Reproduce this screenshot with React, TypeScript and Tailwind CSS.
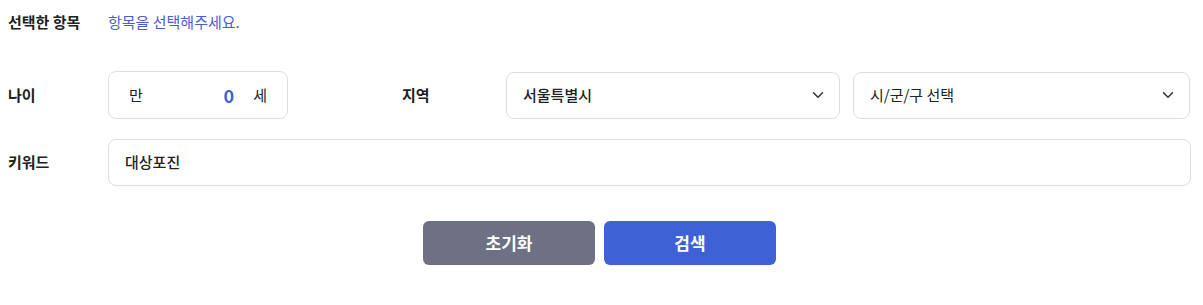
import React from 'react';
import { ChevronDown } from 'lucide-react';

const font = { fontFamily: '"Noto Sans CJK KR", "Noto Sans", sans-serif' };

const SelectBox = ({ value, className }: { value: string; className: string }) => (
  <div
    className={`${className} h-[47px] flex items-center justify-between pl-[16px] pr-[12px] border border-[#dedede] rounded-[8px] bg-white text-[15px] text-[#222]`}
  >
    <span>{value}</span>
    <ChevronDown size={18} strokeWidth={2} className="text-[#333]" />
  </div>
);

export default function App() {
  return (
    <div className="w-[1203px] h-[305px] bg-white pl-[8px] pr-[12px] pt-[12px]" style={font}>
      <div className="flex items-center h-[20px] text-[15px]">
        <span className="w-[100px] font-bold text-[#222]">선택한 항목</span>
        <span className="text-[#4a5dd6]">항목을 선택해주세요.</span>
      </div>

      <div className="flex items-center mt-[39px]">
        <span className="w-[100px] text-[15px] font-bold text-[#222]">나이</span>
        <div className="w-[180px] h-[48px] flex items-center border border-[#dedede] rounded-[8px] pl-[20px] pr-[20px] text-[15px] text-[#222]">
          <span>만</span>
          <span className="ml-auto text-[18px] font-semibold text-[#3f62d6]">0</span>
          <span className="ml-[19px]">세</span>
        </div>
        <span className="w-[104px] ml-[114px] text-[15px] font-bold text-[#222]">지역</span>
        <SelectBox value="서울특별시" className="w-[334px] font-medium" />
        <SelectBox value="시/군/구 선택" className="w-[337px] ml-[13px]" />
      </div>

      <div className="flex items-center mt-[20px]">
        <span className="w-[100px] text-[15px] font-bold text-[#222]">키워드</span>
        <div className="flex-1 h-[47px] flex items-center border border-[#dedede] rounded-[8px] pl-[16px] text-[15px] font-medium text-[#222]">
          대상포진
        </div>
      </div>

      <div className="flex justify-center gap-[9px] mt-[35px]">
        <button className="w-[172px] h-[44px] rounded-[6px] bg-[#6e7184] text-white text-[17px] font-bold">
          초기화
        </button>
        <button className="w-[172px] h-[44px] rounded-[6px] bg-[#3e61d6] text-white text-[17px] font-bold">
          검색
        </button>
      </div>
    </div>
  );
}
